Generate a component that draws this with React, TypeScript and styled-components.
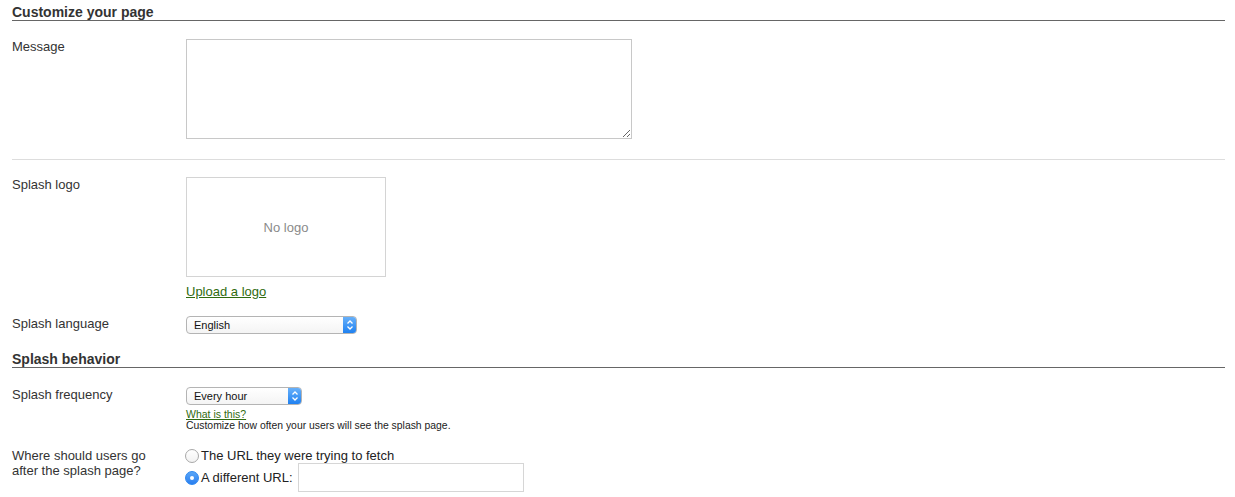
import styled, { createGlobalStyle } from 'styled-components';

const GlobalStyle = createGlobalStyle`
  body {
    margin: 0;
    background: #fff;
    font-family: "Liberation Sans", Arial, sans-serif;
    font-size: 13px;
    color: #333;
  }
`;

const Page = styled.div`
  padding: 0 10px 0 12px;
`;

const SectionTitle = styled.h2<{ $top: number }>`
  margin: ${(p) => p.$top}px 0 0;
  height: 16px;
  line-height: 16px;
  font-size: 14px;
  font-weight: 700;
  color: #333;
  border-bottom: 1px solid #666;
`;

const Row = styled.div<{ $top: number; $bottom?: number; $divider?: boolean }>`
  display: grid;
  grid-template-columns: 174px 1fr;
  padding-top: ${(p) => p.$top}px;
  padding-bottom: ${(p) => p.$bottom ?? 0}px;
  border-bottom: ${(p) => (p.$divider ? '1px solid #ddd' : 'none')};
`;

const Label = styled.div<{ $pad?: number }>`
  padding-top: ${(p) => p.$pad ?? 0}px;
  line-height: 15px;
  color: #333;
`;

const Field = styled.div`
  display: flex;
  flex-direction: column;
  align-items: flex-start;
`;

const TextArea = styled.textarea`
  box-sizing: border-box;
  width: 446px;
  height: 100px;
  border: 1px solid #c8c8c8;
  margin: 0;
  padding: 2px;
  font-family: inherit;
`;

const LogoBox = styled.div`
  box-sizing: border-box;
  width: 200px;
  height: 100px;
  border: 1px solid #d4d4d4;
  display: flex;
  align-items: center;
  justify-content: center;
  color: #8a8a8a;
  font-size: 13px;
`;

const Link = styled.a<{ $small?: boolean }>`
  color: #2f6b0f;
  text-decoration: underline;
  font-size: ${(p) => (p.$small ? '10.5px' : '13px')};
  line-height: ${(p) => (p.$small ? '12px' : '16px')};
  margin-top: ${(p) => (p.$small ? '3px' : '7px')};
  cursor: pointer;
`;

const Hint = styled.div`
  font-size: 10.4px;
  line-height: 12px;
  color: #222;
`;

const Select = styled.div<{ $width: number }>`
  box-sizing: border-box;
  width: ${(p) => p.$width}px;
  height: 18px;
  border: 1px solid #b4b4b4;
  border-radius: 4px;
  display: flex;
  align-items: center;
  justify-content: space-between;
  background: linear-gradient(#fff, #f4f4f4);
  font-size: 11px;
  color: #111;
  padding-left: 7px;
  overflow: hidden;
`;

const Stepper = styled.span`
  width: 14px;
  height: 18px;
  margin-right: -1px;
  border-radius: 0 4px 4px 0;
  background: linear-gradient(#6cb3fa, #1b7ef0);
  display: flex;
  align-items: center;
  justify-content: center;
`;

const RadioLine = styled.label`
  display: flex;
  align-items: center;
  gap: 2px;
  color: #222;
  line-height: 15px;
`;

const Radio = styled.span<{ $checked?: boolean }>`
  box-sizing: border-box;
  width: 14px;
  height: 14px;
  border-radius: 50%;
  margin-left: -1px;
  border: 1px solid ${(p) => (p.$checked ? '#2d87f0' : '#a8a8a8')};
  background: ${(p) => (p.$checked ? 'linear-gradient(#5aa6f7, #2a7ff0)' : 'linear-gradient(#fff, #f2f2f2)')};
  display: flex;
  align-items: center;
  justify-content: center;
  &::after {
    content: '';
    width: 4px;
    height: 4px;
    border-radius: 50%;
    background: #fff;
    display: ${(p) => (p.$checked ? 'block' : 'none')};
  }
`;

const UrlInput = styled.input`
  box-sizing: border-box;
  width: 226px;
  height: 29px;
  margin: 0 0 0 3px;
  border: 1px solid #d6d6d6;
  font-family: inherit;
`;

const Choices = styled.div`
  display: flex;
  flex-direction: column;
  padding-top: 2px;
`;

const Arrows = () => (
  <svg width="8" height="12" viewBox="0 0 8 12" fill="none" stroke="#fff" strokeWidth="1.3">
    <path d="M1.5 4.5 L4 2 L6.5 4.5" />
    <path d="M1.5 7.5 L4 10 L6.5 7.5" />
  </svg>
);

const App = () => {
  return (
    <Page>
      <GlobalStyle />
      <SectionTitle $top={4}>Customize your page</SectionTitle>
      <Row $top={18} $bottom={20} $divider>
        <Label $pad={0}>Message</Label>
        <Field>
          <TextArea />
        </Field>
      </Row>
      <Row $top={17}>
        <Label $pad={0}>Splash logo</Label>
        <Field>
          <LogoBox>No logo</LogoBox>
          <Link>Upload a logo</Link>
        </Field>
      </Row>
      <Row $top={16}>
        <Label $pad={0}>Splash language</Label>
        <Field>
          <Select $width={171}>
            English
            <Stepper><Arrows /></Stepper>
          </Select>
        </Field>
      </Row>
      <SectionTitle $top={17}>Splash behavior</SectionTitle>
      <Row $top={19}>
        <Label $pad={0}>Splash frequency</Label>
        <Field>
          <Select $width={116}>
            Every hour
            <Stepper><Arrows /></Stepper>
          </Select>
          <Link $small>What is this?</Link>
          <Hint>Customize how often your users will see the splash page.</Hint>
        </Field>
      </Row>
      <Row $top={14}>
        <Label $pad={2}>
          Where should users go
          <br />
          after the splash page?
        </Label>
        <Choices>
          <RadioLine>
            <Radio />
            The URL they were trying to fetch
          </RadioLine>
          <RadioLine>
            <Radio $checked />
            A different URL:
            <UrlInput />
          </RadioLine>
        </Choices>
      </Row>
    </Page>
  );
};

export default App;
